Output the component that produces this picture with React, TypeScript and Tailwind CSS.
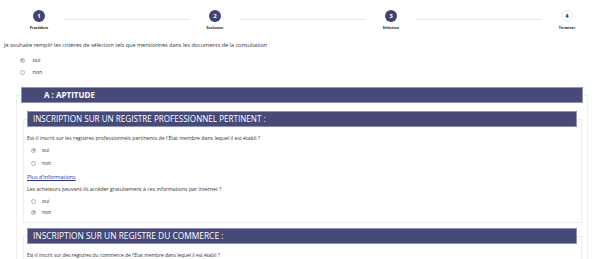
import React from "react";

const font = { fontFamily: '"Open Sans", "Liberation Sans", sans-serif' };

function Step({ n, label, done = true }: { n: number; label: string; done?: boolean }) {
  return (
    <div className="w-[50px] flex flex-col items-center pt-[10px]">
      <div
        className={
          done
            ? "w-[12px] h-[12px] rounded-full bg-[#3f4376] text-white text-[6px] font-bold flex items-center justify-center leading-none"
            : "w-[12px] h-[12px] rounded-full bg-white border border-[#ececec] text-[#222] text-[6px] font-bold flex items-center justify-center leading-none"
        }
      >
        {n}
      </div>
      <div className="mt-[3px] text-[3.6px] leading-[5px] font-bold text-[#222] whitespace-nowrap">{label}</div>
    </div>
  );
}

function Line() {
  return <div className="w-[126px] h-px bg-[#e8e8e8] mt-[19px]" />;
}

function Radio({ checked }: { checked?: boolean }) {
  return checked ? (
    <span className="w-[5px] h-[5px] rounded-full border-[0.8px] border-[#b5b5b5] bg-[#ececec] flex items-center justify-center shrink-0">
      <span className="w-[2px] h-[2px] rounded-full bg-[#9a9a9a]" />
    </span>
  ) : (
    <span className="w-[5px] h-[5px] rounded-full border-[0.8px] border-[#b5b5b5] bg-white shrink-0" />
  );
}

function Legend({ children, size, pl }: { children: React.ReactNode; size: string; pl: string }) {
  return (
    <legend className="w-full p-0">
      <div
        className={
          "h-[16px] bg-[#474a78] border border-[#9093b9] flex items-center text-white whitespace-nowrap " +
          size +
          " " +
          pl
        }
      >
        {children}
      </div>
    </legend>
  );
}

function InnerRadio({ label, checked, mt }: { label: string; checked?: boolean; mt: string }) {
  return (
    <div className={"flex items-center h-[6px] pl-[4px] " + mt}>
      <Radio checked={checked} />
      <span className="ml-[6px] text-[5px] leading-[6px] text-[#333]">{label}</span>
    </div>
  );
}

export default function App() {
  return (
    <div className="w-[605px] h-[259px] overflow-hidden bg-white text-[#333]" style={font}>
      <div className="h-[42px] flex pl-[14px]">
        <Step n={1} label="Procédure" />
        <Line />
        <Step n={2} label="Exclusion" />
        <Line />
        <Step n={3} label="Sélection" />
        <Line />
        <Step n={4} label="Terminer" done={false} />
      </div>
      <p className="pl-[4px] text-[5.5px] leading-[6px] text-[#333] whitespace-nowrap">
        Je souhaite remplir les critères de sélection tels que mentionnés dans les documents de la consultation
      </p>
      <div className="flex items-center h-[6px] pl-[19.5px] mt-[9px]">
        <Radio checked />
        <span className="ml-[8px] text-[5.4px] leading-[6px]">oui</span>
      </div>
      <div className="flex items-center h-[6px] pl-[19.5px] mt-[6px]">
        <Radio />
        <span className="ml-[8px] text-[5.4px] leading-[6px]">non</span>
      </div>

      <fieldset className="mt-[12px] ml-[16px] w-[572px] border border-[#efefef] px-[4px] pb-[20px]">
        <Legend size="font-bold text-[8px]" pl="pl-[22px]">A : APTITUDE</Legend>

        <fieldset className="mt-[8px] ml-[2px] mr-[1px] border border-[#ececec] pl-[3px] pr-[4px] pb-[7px]">
          <Legend size="text-[8.1px]" pl="pl-[5px]">INSCRIPTION SUR UN REGISTRE PROFESSIONNEL PERTINENT :</Legend>
          <p className="mt-[8px] text-[5.2px] leading-[6px] whitespace-nowrap">
            Est-il inscrit sur les registres professionnels pertinents de l'État membre dans lequel il est établi ?
          </p>
          <InnerRadio label="oui" checked mt="mt-[6px]" />
          <InnerRadio label="non" mt="mt-[7px]" />
          <p className="mt-[8px] text-[5.4px] leading-[6px]">
            <a className="text-[#2b2f9e] underline">Plus d'informations</a>
          </p>
          <p className="mt-[6px] text-[5.2px] leading-[6px] whitespace-nowrap">
            Les acheteurs peuvent-ils accéder gratuitement à ces informations par internet ?
          </p>
          <InnerRadio label="oui" mt="mt-[6px]" />
          <InnerRadio label="non" checked mt="mt-[5px]" />
        </fieldset>

        <fieldset className="mt-[5px] ml-[2px] mr-[1px] border border-[#ececec] pl-[3px] pr-[4px] pb-[20px]">
          <Legend size="text-[8.4px]" pl="pl-[5px]">INSCRIPTION SUR UN REGISTRE DU COMMERCE :</Legend>
          <p className="mt-[8px] text-[4.85px] leading-[6px] whitespace-nowrap">
            Est-il inscrit sur des registres du commerce de l'État membre dans lequel il est établi ?
          </p>
        </fieldset>
      </fieldset>
    </div>
  );
}
